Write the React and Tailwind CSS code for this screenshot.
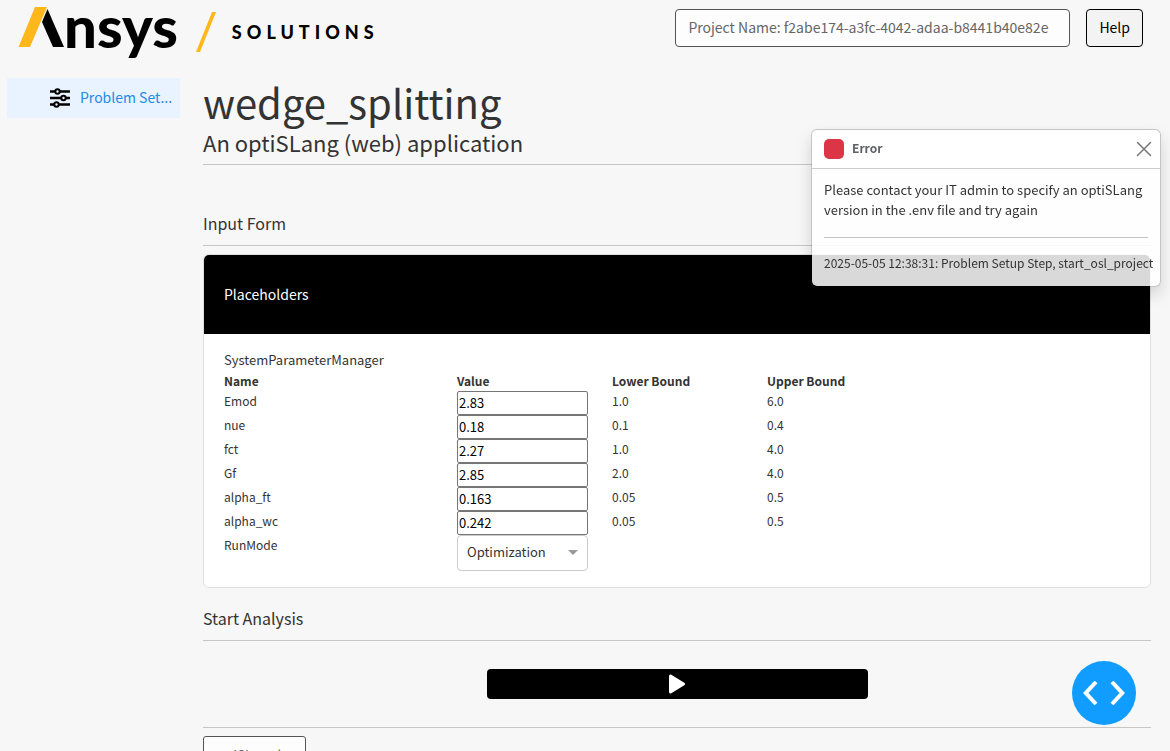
import React, { useState } from "react";

const PARAMETERS = [
  { name: "Emod", value: "2.83", lower: "1.0", upper: "6.0" },
  { name: "nue", value: "0.18", lower: "0.1", upper: "0.4" },
  { name: "fct", value: "2.27", lower: "1.0", upper: "4.0" },
  { name: "Gf", value: "2.85", lower: "2.0", upper: "4.0" },
  { name: "alpha_ft", value: "0.163", lower: "0.05", upper: "0.5" },
  { name: "alpha_wc", value: "0.242", lower: "0.05", upper: "0.5" },
];

export default function App() {
  const [showError, setShowError] = useState(true);

  return (
    <div className="min-h-screen bg-[#f7f7f7] font-['Noto_Sans_CJK_SC',sans-serif] text-[#333]">
      <Header />
      <div className="flex">
        <Sidebar />
        <main className="min-w-0 flex-1 pl-[23px] pr-[19px] pb-6">
          <h1 className="text-[40px] leading-[48px]">wedge_splitting</h1>
          <p className="mt-0.5 text-[22px] leading-7">An optiSLang (web) application</p>
          <hr className="mt-2 border-[#c6c6c6]" />

          <SectionTitle className="mt-12">Input Form</SectionTitle>
          <ParameterCard />

          <SectionTitle className="mt-5">Start Analysis</SectionTitle>
          <div className="flex justify-center py-7">
            <button
              type="button"
              aria-label="Start analysis"
              className="flex h-[30px] w-[381px] items-center justify-center rounded bg-black"
            >
              <svg viewBox="0 0 16 20" className="h-5 w-4" fill="#fff" stroke="#fff" strokeWidth="3" strokeLinejoin="round">
                <path d="M1.5 2v16L14.5 10z" />
              </svg>
            </button>
          </div>
          <hr className="border-[#c6c6c6]" />
          <button
            type="button"
            className="mt-2 h-[38px] rounded-[3px] border border-[#555] bg-[#fdfdfd] px-[9px] text-[13px] text-[#666]"
          >
            optiSLang log
          </button>
        </main>
      </div>

      {showError && <ErrorToast onClose={() => setShowError(false)} />}

      <button
        type="button"
        aria-label="Developer tools"
        className="fixed right-[34px] bottom-[26px] flex size-16 items-center justify-center rounded-full bg-[#119dff]"
      >
        <svg viewBox="0 0 42 24" className="h-6 w-[42px]" fill="none" stroke="#fff" strokeWidth="4">
          <path d="M13 1L2.800 12L13 23M29 1L39.200 12L29 23" />
        </svg>
      </button>
    </div>
  );
}

function Header() {
  return (
    <header className="flex items-start justify-between pr-[27px] pl-[18px]">
      <div className="flex h-[78px] items-start">
        <div className="flex">
          <svg viewBox="0 0 46 50" className="mt-[7px] h-[50px] w-[46px]">
            <path d="M.5 40L17 0h12L12 40z" fill="#ffb71b" />
            <path d="M29.500 2L46 40H35L24 15z" fill="#000" />
          </svg>
          <span className="font-['Lato',sans-serif] text-[58px] leading-[52px] font-black text-black">nsys</span>
        </div>
        <svg viewBox="0 0 20 40" className="mt-3 ml-[18px] h-10 w-5">
          <path d="M0 40L16 0h4L4 40z" fill="#ffb71b" />
        </svg>
        <span className="ml-4 font-['Lato',sans-serif] text-[18px] leading-[64px] font-black tracking-[5px] text-black">
          SOLUTIONS
        </span>
      </div>
      <div className="flex gap-4 pt-[9px]">
        <input
          aria-label="Project name"
          readOnly
          defaultValue="Project Name: f2abe174-a3fc-4042-adaa-b8441b40e82e"
          className="h-[38px] w-[395px] rounded border border-[#555] bg-[#fdfdfd] px-3 pb-0.5 text-[14px] text-[#666]"
        />
        <button
          type="button"
          className="h-[38px] rounded border border-black bg-[#f3f3f3] px-3 pb-0.5 text-[14px] text-black"
        >
          Help
        </button>
      </div>
    </header>
  );
}

function Sidebar() {
  return (
    <nav className="w-[180px] shrink-0 pl-[7px]">
      <a href="#setup" className="flex h-10 items-center gap-2.5 bg-[#e8f3ff] pl-[43px] text-[14px] text-[#228be6]">
        <svg viewBox="0 0 20 20" className="size-5 shrink-0" fill="#e8f3ff" stroke="#000" strokeWidth="2">
          <path d="M0 3.500h20M0 10h20M0 16.500h20" strokeWidth="2.500" />
          <circle cx="7.500" cy="3.500" r="2.200" />
          <circle cx="13.500" cy="10" r="2.200" />
          <circle cx="6.500" cy="16.500" r="2.200" />
        </svg>
        <span className="pb-0.5 whitespace-nowrap">Problem Set...</span>
      </a>
    </nav>
  );
}

function SectionTitle({ className, children }) {
  return (
    <div className={className}>
      <h2 className="text-[16px] leading-5">{children}</h2>
      <hr className="mt-3 border-[#c6c6c6]" />
    </div>
  );
}

function ParameterCard() {
  return (
    <section className="mt-2 overflow-hidden rounded-md border border-[#dfdfdf] bg-white">
      <h3 className="bg-black px-5 text-[14px] leading-[79px] text-white">Placeholders</h3>
      <div className="px-5 py-4">
        <p className="text-[13px] leading-5">SystemParameterManager</p>
        <table className="w-full table-fixed border-collapse text-left text-[12px]">
          <colgroup>
            <col className="w-[233px]" />
            <col className="w-[155px]" />
            <col className="w-[155px]" />
            <col />
          </colgroup>
          <thead>
            <tr className="h-[21px] leading-5">
              <th>Name</th>
              <th>Value</th>
              <th>Lower Bound</th>
              <th>Upper Bound</th>
            </tr>
          </thead>
          <tbody className="align-top leading-5">
            {PARAMETERS.map((p) => (
              <tr key={p.name} className="h-6">
                <td>
                  <label htmlFor={p.name}>{p.name}</label>
                </td>
                <td className="pr-6">
                  <input
                    id={p.name}
                    type="text"
                    defaultValue={p.value}
                    className="block h-6 w-full rounded-[2px] border border-[#767676] bg-white px-px pb-0.5 text-[13px] text-black"
                  />
                </td>
                <td>{p.lower}</td>
                <td>{p.upper}</td>
              </tr>
            ))}
            <tr>
              <td>
                <label htmlFor="run-mode">RunMode</label>
              </td>
              <td className="pr-6">
                <div className="relative">
                  <select
                    id="run-mode"
                    className="block h-9 w-full appearance-none rounded border border-[#ccc] bg-white px-[9px] pb-0.5 text-[13px]"
                  >
                    <option>Optimization</option>
                    <option>Sensitivity</option>
                  </select>
                  <span className="pointer-events-none absolute top-[15px] right-2.5 border-x-[5px] border-t-[5px] border-x-transparent border-t-[#999]" />
                </div>
              </td>
            </tr>
          </tbody>
        </table>
      </div>
    </section>
  );
}

function ErrorToast({ onClose }) {
  return (
    <div
      role="alert"
      className="fixed top-[129px] right-[9px] w-[350px] rounded-md border border-black/20 bg-white/85 bg-clip-padding text-[13px] shadow-[0_8px_16px_rgba(0,0,0,0.15)]"
    >
      <div className="flex h-[39px] items-center rounded-t-md border-b border-[#ccc] bg-white/85 px-3 text-[12px] text-[#5c6166]">
        <span className="size-5 rounded-[5px] bg-[#dc3545]" />
        <strong className="ml-2 flex-1 pb-0.5">Error</strong>
        <button type="button" aria-label="Close" onClick={onClose}>
          <svg viewBox="0 0 16 16" className="-mr-1 size-4" fill="none" stroke="#777" strokeWidth="1.500" strokeLinecap="round">
            <path d="M1.500 1.500l13 13M14.500 1.500l-13 13" />
          </svg>
        </button>
      </div>
      <div className="px-3 pt-[11px] pb-[13px] leading-5">
        <p>Please contact your IT admin to specify an optiSLang version in the .env file and try again</p>
        <hr className="mt-[17px] mb-[15px] border-[#c4c4c4]" />
        <p className="text-[12px] whitespace-nowrap">2025-05-05 12:38:31: Problem Setup Step, start_osl_project</p>
      </div>
    </div>
  );
}
